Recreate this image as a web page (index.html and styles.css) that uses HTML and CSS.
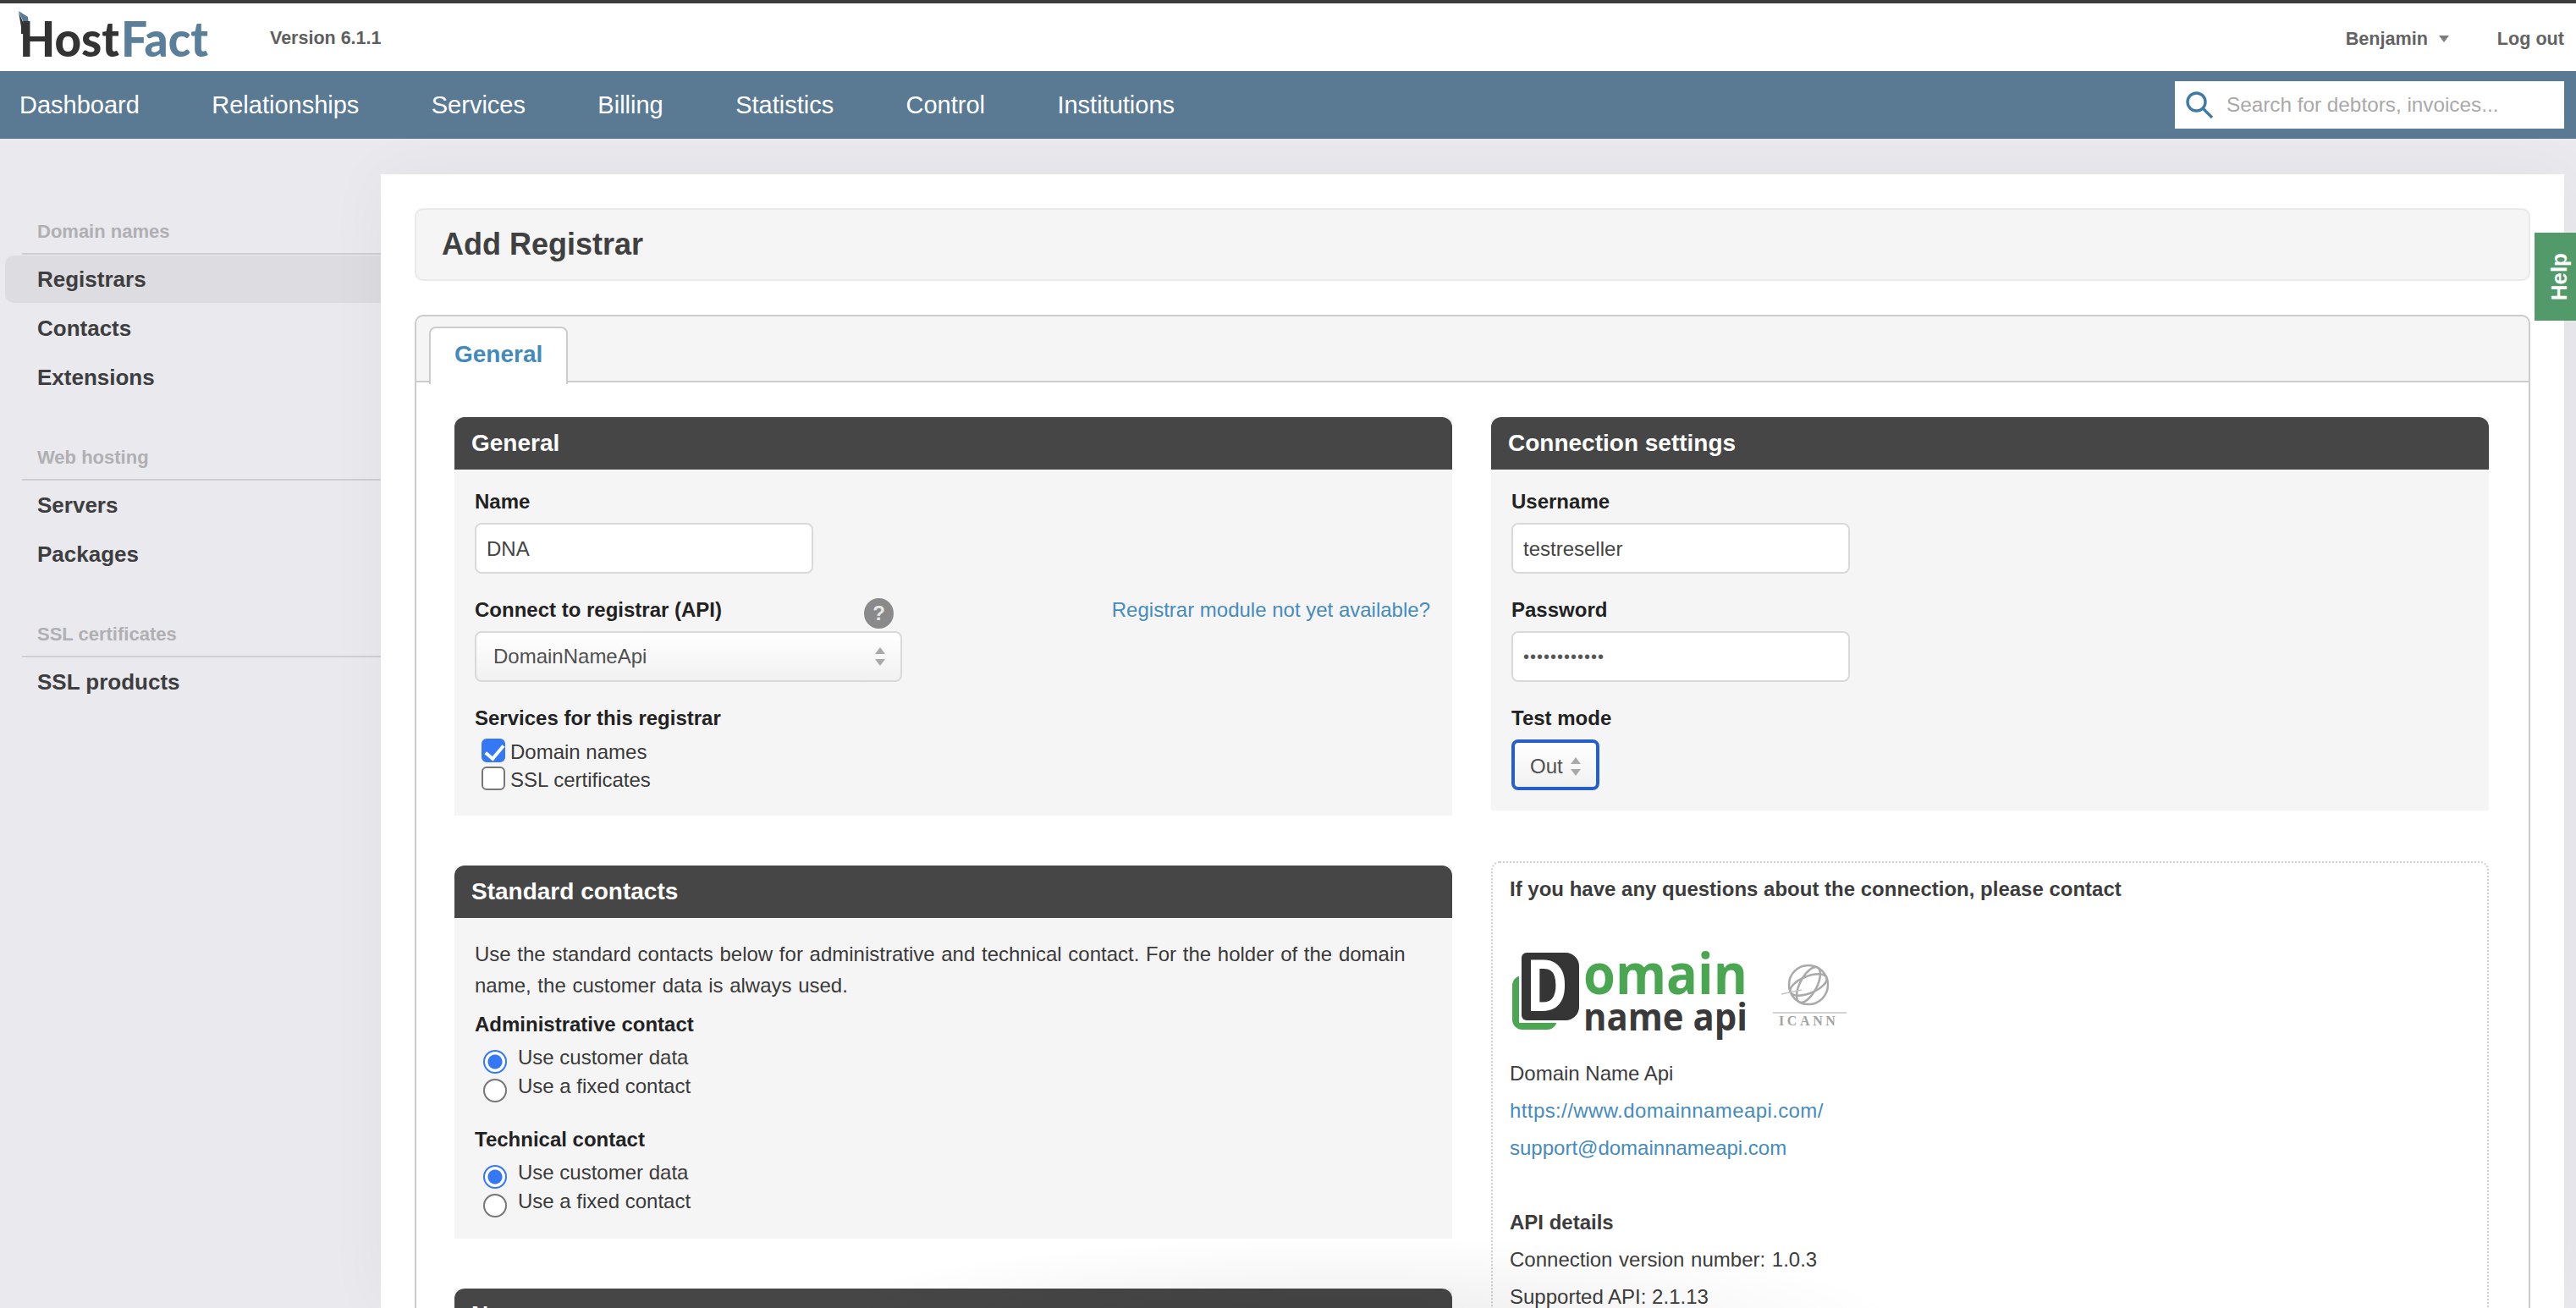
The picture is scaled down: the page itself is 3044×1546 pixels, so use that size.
FILE: index.html
```html
<!DOCTYPE html>
<html lang="en">
<head>
<meta charset="utf-8">
<title>Add Registrar - HostFact</title>
<link rel="stylesheet" href="styles.css">
</head>
<body>
<header class="topbar">
  <svg class="logo" width="232" height="76" viewBox="0 0 232 76">
    <polygon class="quill" points="0,7 11,14 13,32 9,28"/>
    <polygon class="quill-dark" points="0,8 8,27 8,34 3,34 3,26"/>
    <text class="logo-host" x="1" y="61" textLength="118" lengthAdjust="spacingAndGlyphs">Host</text>
    <text class="logo-fact" x="121" y="61" textLength="103" lengthAdjust="spacingAndGlyphs">Fact</text>
  </svg>
  <span class="version">Version 6.1.1</span>
  <div class="user">
    <span class="user-name">Benjamin</span>
    <span class="caret"></span>
    <span class="logout">Log out</span>
  </div>
</header>
<nav class="mainnav">
  <a class="nav-item">Dashboard</a>
  <a class="nav-item">Relationships</a>
  <a class="nav-item">Services</a>
  <a class="nav-item">Billing</a>
  <a class="nav-item">Statistics</a>
  <a class="nav-item">Control</a>
  <a class="nav-item">Institutions</a>
  <div class="search">
    <svg class="search-icon" width="34" height="34" viewBox="0 0 34 34">
      <circle cx="13.5" cy="13.5" r="10.5"/>
      <line x1="21" y1="21" x2="32" y2="32"/>
    </svg>
    <input class="search-input" type="text" placeholder="Search for debtors, invoices...">
  </div>
</nav>
<div class="layout">
  <aside class="sidebar">
    <div class="side-group">
      <div class="side-head">Domain names</div>
      <a class="side-item side-item-active">Registrars</a>
      <a class="side-item">Contacts</a>
      <a class="side-item">Extensions</a>
    </div>
    <div class="side-group">
      <div class="side-head">Web hosting</div>
      <a class="side-item">Servers</a>
      <a class="side-item">Packages</a>
    </div>
    <div class="side-group">
      <div class="side-head">SSL certificates</div>
      <a class="side-item">SSL products</a>
    </div>
  </aside>
  <main class="content">
    <h1 class="page-title">Add Registrar</h1>
    <div class="tabs">
      <div class="tab-bar"><a class="tab">General</a></div>
      <div class="tab-body">
        <div class="column">
          <section class="panel">
            <h2 class="panel-head">General</h2>
            <div class="panel-body">
              <label class="field-label">Name</label>
              <input class="text-input" type="text" value="DNA">
              <div class="api-row">
                <div class="api-field">
                  <div class="api-head">
                    <label class="field-label">Connect to registrar (API)</label>
                    <span class="help-dot">?</span>
                  </div>
                  <div class="select select-wide">
                    <span>DomainNameApi</span>
                    <span class="updown"><i class="up"></i><i class="down"></i></span>
                  </div>
                </div>
                <a class="link api-link">Registrar module not yet available?</a>
              </div>
              <label class="field-label field-gap check-title">Services for this registrar</label>
              <div class="check-row"><input class="check" type="checkbox" checked><span>Domain names</span></div>
              <div class="check-row"><input class="check" type="checkbox"><span>SSL certificates</span></div>
            </div>
          </section>
          <section class="panel panel-next">
            <h2 class="panel-head">Standard contacts</h2>
            <div class="panel-body panel-body-contacts">
              <p class="intro">Use the standard contacts below for administrative and technical contact. For the holder of the domain name, the customer data is always used.</p>
              <label class="field-label admin-title">Administrative contact</label>
              <div class="radio-row"><input class="radio" type="radio" name="admin" checked><span>Use customer data</span></div>
              <div class="radio-row"><input class="radio" type="radio" name="admin"><span>Use a fixed contact</span></div>
              <label class="field-label tech-title">Technical contact</label>
              <div class="radio-row"><input class="radio" type="radio" name="tech" checked><span>Use customer data</span></div>
              <div class="radio-row"><input class="radio" type="radio" name="tech"><span>Use a fixed contact</span></div>
            </div>
          </section>
          <section class="panel panel-next">
            <h2 class="panel-head">Name servers</h2>
          </section>
        </div>
        <div class="column">
          <section class="panel">
            <h2 class="panel-head">Connection settings</h2>
            <div class="panel-body panel-body-conn">
              <label class="field-label">Username</label>
              <input class="text-input" type="text" value="testreseller">
              <label class="field-label field-gap">Password</label>
              <input class="text-input text-password" type="password" value="testpassword">
              <label class="field-label field-gap">Test mode</label>
              <div class="select select-small">
                <span>Out</span>
                <span class="updown"><i class="up"></i><i class="down"></i></span>
              </div>
            </div>
          </section>
          <section class="contact-box">
            <div class="info-line info-strong">If you have any questions about the connection, please contact</div>
            <svg class="partner-logo" width="400" height="112" viewBox="0 0 400 112">
              <rect class="dl-green" x="3" y="33" width="53" height="64" rx="12"/>
              <rect class="dl-white" x="11" y="26" width="60" height="63"/>
              <rect class="dl-dark" x="14" y="6" width="68" height="80" rx="16"/>
              <rect class="dl-dark" x="14" y="6" width="24" height="80" rx="6"/>
              <text class="dl-d" x="19" y="75" textLength="50" lengthAdjust="spacingAndGlyphs">D</text>
              <text class="dl-main" x="87" y="55" textLength="194" lengthAdjust="spacingAndGlyphs">omain</text>
              <text class="dl-sub" x="87" y="98" textLength="194" lengthAdjust="spacingAndGlyphs">name api</text>
              <g class="icann">
                <circle cx="353" cy="44" r="23"/>
                <ellipse cx="353" cy="44" rx="10" ry="23" transform="rotate(28 353 44)"/>
                <ellipse cx="353" cy="44" rx="23" ry="10" transform="rotate(-22 353 44)"/>
                <line class="icann-line" x1="321" y1="55" x2="345" y2="50"/>
                <line class="icann-line" x1="311" y1="77" x2="398" y2="77"/>
              </g>
              <text class="icann-text" x="318" y="92">ICANN</text>
            </svg>
            <div class="info-line">Domain Name Api</div>
            <div class="info-line"><a class="link link-url">https://www.domainnameapi.com/</a></div>
            <div class="info-line"><a class="link">support@domainnameapi.com</a></div>
            <div class="info-line info-bold api-title">API details</div>
            <div class="info-line info-version">Connection version number: 1.0.3</div>
            <div class="info-line">Supported API: 2.1.13</div>
          </section>
        </div>
      </div>
    </div>
  </main>
</div>
<div class="bottom-glow"></div>
<a class="help-tab"><span>Help</span></a>
</body>
</html>
```
FILE: styles.css
```css
* { box-sizing: border-box; }
html {
  margin: 0;
  padding: 0;
  width: 3044px;
  height: 1546px;
  overflow: hidden;
}
body {
  position: relative;
  margin: 0;
  padding: 0;
  width: 3044px;
  height: 1546px;
  overflow: hidden;
  background: #e9e9ee;
  font-family: "Liberation Sans", Arial, sans-serif;
  font-size: 24px;
  color: #3c3c3c;
}
.topbar {
  display: flex;
  align-items: center;
  height: 84px;
  border-top: 4px solid #3c3c3c;
  background: #fff;
  padding-right: 14px;
}
.logo { margin: 0 0 0 22px; flex: none; }
.quill { fill: #5a7a94; }
.quill-dark { fill: #333; }
.logo-host, .logo-fact { font-family: Lato, "Open Sans", sans-serif; font-weight: 900; font-size: 57px; }
.logo-host { fill: #333; }
.logo-fact { fill: #5a7f9b; }
.version { margin: 3px 0 0 65px; font-size: 21.5px; font-weight: 700; color: #5e5e5e; }
.user { margin: 3px 0 0 auto; display: flex; align-items: center; font-size: 21.6px; font-weight: 700; color: #636363; }
.caret { margin-left: 13px; width: 0; height: 0; border: 6px solid transparent; border-top: 8px solid #7d7d7d; border-bottom: 0; }
.logout { margin-left: 57px; }

.mainnav {
  display: flex;
  align-items: center;
  height: 80px;
  padding: 0 14px 0 23px;
  background: #5a7a94;
}
.nav-item { font-size: 29px; color: #fff; margin-right: 85.4px; line-height: 1; }
.search { margin-left: auto; display: flex; align-items: center; width: 460px; height: 56px; background: #fff; padding-left: 12px; }
.search-icon { flex: none; }
.search-icon circle, .search-icon line { fill: none; stroke: #3e7ca6; stroke-width: 3.4; }
.search-input { flex: 1; min-width: 0; border: 0; outline: 0; padding: 0 0 0 15px; background: transparent; font: 400 24.3px "Liberation Sans", Arial, sans-serif; color: #444; }
.search-input::placeholder { color: #a9a9a9; opacity: 1; }

.layout { display: flex; align-items: flex-start; }
.sidebar { flex: none; width: 450px; padding-top: 96px; }
.side-group { display: flex; flex-direction: column; gap: 2px; margin-bottom: 53px; }
.side-head { height: 41px; margin: 0 0 -1px 26px; padding-left: 18px; line-height: 28px; border-bottom: 2px solid #cfcfd2; font-size: 22px; font-weight: 700; color: #b0b0b2; }
.side-item { display: flex; align-items: center; height: 56px; margin-left: 6px; padding-left: 38px; font-size: 26px; font-weight: 700; color: #3e3e40; }
.side-item-active { background: #dddde1; border-radius: 10px 0 0 10px; }

.content {
  flex: none;
  width: 2580px;
  margin-top: 42px;
  height: 1340px;
  padding: 40px 40px 0;
  background: #fff;
  box-shadow: 0 0 70px rgba(0, 0, 0, 0.045);
}
.page-title {
  margin: 0 0 40px;
  height: 86px;
  line-height: 82px;
  padding-left: 30px;
  font-size: 36px;
  font-weight: 700;
  color: #404040;
  background: #f5f5f5;
  border: 2px solid #e9e9ec;
  border-radius: 10px;
}
.tab-bar {
  height: 80px;
  padding: 12px 0 0 15px;
  background: #f5f5f5;
  border: 2px solid #cccccc;
  border-radius: 10px 10px 0 0;
}
.tab {
  display: block;
  width: 164px;
  height: 68px;
  padding: 0 0 4px 28px;
  line-height: 62px;
  font-size: 28px;
  font-weight: 700;
  color: #438abc;
  background: #fff;
  border: 2px solid #cccccc;
  border-bottom: 0;
  border-radius: 8px 8px 0 0;
}
.tab-body {
  display: grid;
  grid-template-columns: 1fr 1fr;
  column-gap: 46px;
  padding: 41px 47px 0 45px;
  border: solid #cccccc;
  border-width: 0 2px;
  min-height: 1100px;
}
.column { min-width: 0; }
.panel { background: #f5f5f5; }
.panel-next { margin-top: 59px; }
.panel-head {
  margin: 0;
  height: 62px;
  padding-left: 20px;
  line-height: 62px;
  font-size: 28px;
  font-weight: 700;
  color: #fff;
  background: #464646;
  border-radius: 12px 12px 0 0;
}
.panel-body { padding: 24px 26px 25px 24px; }
.panel-body-contacts { padding-bottom: 27px; }
.panel-body-conn { padding-bottom: 24px; }
.field-label { display: block; height: 28px; margin-bottom: 11px; line-height: 28px; font-size: 24px; font-weight: 700; color: #222; }
.field-gap { margin-top: 29px; }
.text-input {
  display: block;
  width: 400px;
  height: 60px;
  padding: 2px 12px 0;
  font: 400 24px "Liberation Sans", Arial, sans-serif;
  color: #444;
  background: #fff;
  border: 2px solid #d9d9d9;
  border-radius: 8px;
  outline: 0;
}
.text-password { font-size: 20px; letter-spacing: 1px; padding-top: 0; color: #555; }
.api-row { display: flex; margin-top: 29px; }
.api-field { width: 505px; }
.api-head { display: flex; justify-content: space-between; align-items: flex-start; height: 39px; padding-right: 10px; }
.help-dot {
  display: flex;
  align-items: center;
  justify-content: center;
  width: 35px;
  height: 36px;
  border-radius: 50%;
  background: #8a8a8a;
  font-size: 24px;
  font-weight: 700;
  color: #e8e8e8;
}
.link { color: #468bbd; text-decoration: none; }
.link-url { letter-spacing: 0.4px; }
.api-link { margin-left: auto; line-height: 28px; height: 28px; }
.select {
  display: flex;
  align-items: center;
  height: 60px;
  background: linear-gradient(#ffffff, #f1f1f1);
  border: 2px solid #d9d9d9;
  border-radius: 8px;
  color: #505050;
}
.select-wide { width: 505px; padding: 0 20px; justify-content: space-between; }
.select-small { width: 104px; padding: 3px 0 0 18px; border: 4px solid #2560c8; gap: 9px; }
.updown { display: flex; flex-direction: column; gap: 6px; }
.updown i { display: block; width: 0; height: 0; border-left: 6px solid transparent; border-right: 6px solid transparent; }
.updown .up { border-bottom: 8px solid #a9a9a9; }
.updown .down { border-top: 8px solid #a9a9a9; }
.select-wide .updown { margin-right: -2px; }
.check-title { margin-bottom: 10px; }
.check-row { display: flex; height: 33px; line-height: 31px; margin-left: 8px; gap: 6px; color: #3a3a3a; }
.check {
  appearance: none;
  position: relative;
  flex: none;
  width: 28px;
  height: 28px;
  margin: 0;
  background: #fff;
  border: 2px solid #767676;
  border-radius: 6px;
}
.check:checked { background: #3478f6; border-color: #3478f6; }
.check:checked::after {
  content: "";
  position: absolute;
  left: 7px;
  top: 1px;
  width: 9px;
  height: 18px;
  border: solid #fff;
  border-width: 0 4px 4px 0;
  transform: rotate(40deg);
}
.intro { margin: 0 0 14px; line-height: 37px; color: #3a3a3a; word-spacing: 1px; }
.admin-title { margin-bottom: 8px; }
.tech-title { margin: 32px 0 8px; }
.radio-row { display: flex; height: 34px; line-height: 34px; margin-left: 10px; gap: 13px; color: #3a3a3a; }
.radio {
  appearance: none;
  flex: none;
  width: 28px;
  height: 28px;
  margin: 8px 0 0;
  background: #fff;
  border: 2px solid #767676;
  border-radius: 50%;
}
.radio:checked { border-color: #3478f6; background: radial-gradient(circle, #3478f6 0 8px, #fff 9px); }
.contact-box {
  margin-top: 60px;
  height: 600px;
  padding: 9px 20px;
  border: 2px dotted #cfcfcf;
  border-radius: 10px;
}
.info-line { height: 44px; line-height: 44px; color: #3c3c3c; }
.info-strong { font-weight: 700; }
.info-bold { font-weight: 700; }
.info-version { word-spacing: 1px; }
.api-title { margin-top: 44px; }
.partner-logo { display: block; margin: 47px 0 15px; overflow: visible; }
.dl-green { fill: #4aa651; }
.dl-white { fill: #fff; }
.dl-dark { fill: #353535; }
.dl-d { font: 700 84px "Open Sans", sans-serif; fill: #fff; }
.dl-main { font: 700 66px "Open Sans", sans-serif; fill: #4aa651; }
.dl-sub { font: 700 44px "Open Sans", sans-serif; fill: #3a3a3a; }
.icann circle, .icann ellipse, .icann line { fill: none; stroke: #a9a9a9; stroke-width: 2.5; }
.icann .icann-line { stroke: #c4c4c4; stroke-width: 1.5; }
.icann-text { font: 700 16px "Liberation Serif", serif; letter-spacing: 3.6px; fill: #a3a3a3; }

.bottom-glow {
  position: absolute;
  left: 950px;
  top: 1460px;
  width: 1300px;
  height: 200px;
  background: radial-gradient(ellipse at center, rgba(0, 0, 0, 0.07), rgba(0, 0, 0, 0) 70%);
  pointer-events: none;
}
.help-tab {
  position: absolute;
  right: 0;
  top: 275px;
  width: 49px;
  height: 104px;
  display: flex;
  align-items: center;
  justify-content: center;
  padding-left: 10px;
  background: #539a6b;
}
.help-tab span {
  writing-mode: vertical-rl;
  transform: rotate(180deg);
  font-size: 26px;
  font-weight: 700;
  color: #fff;
}
```
